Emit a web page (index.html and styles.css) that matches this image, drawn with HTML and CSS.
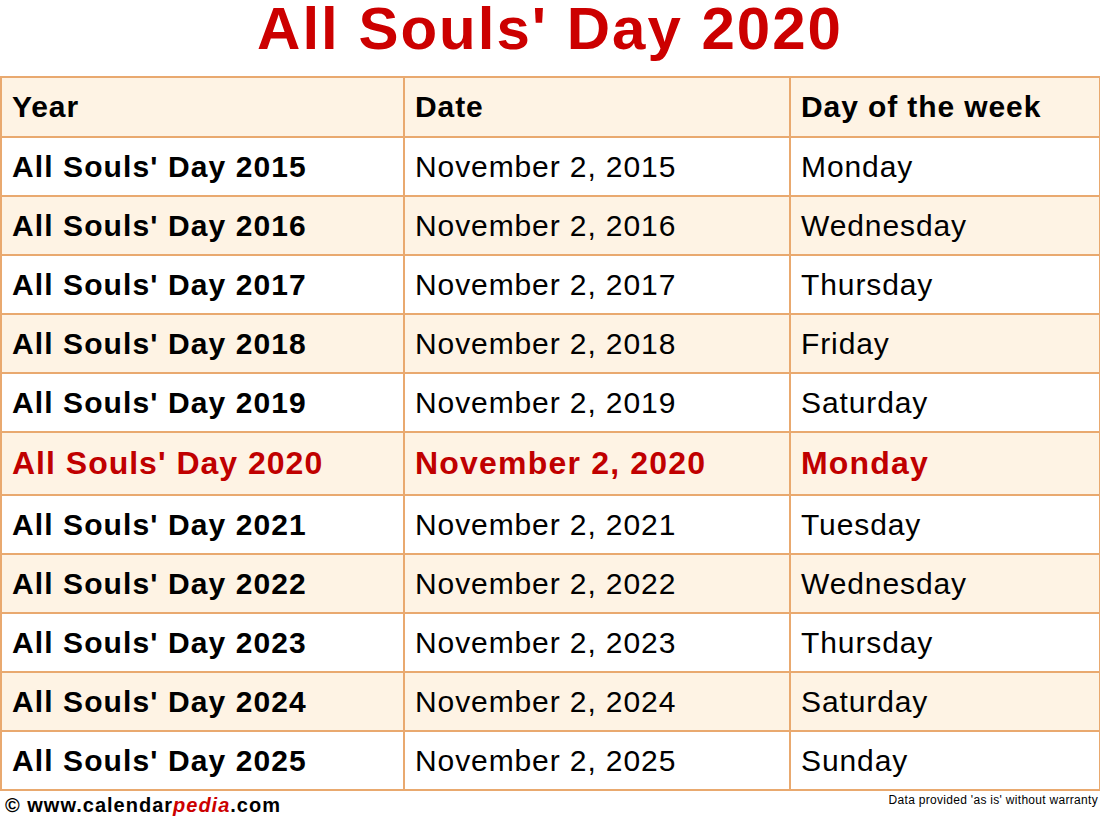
FILE: index.html
```html
<!DOCTYPE html>
<html>
<head>
<meta charset="utf-8">
<link rel="stylesheet" href="styles.css">
</head>
<body>
<h1 class="title">All Souls' Day 2020</h1>
<table class="days">
  <colgroup><col class="c1"><col class="c2"><col class="c3"></colgroup>
  <thead>
    <tr class="alt"><th>Year</th><th>Date</th><th>Day of the week</th></tr>
  </thead>
  <tbody>
    <tr><td>All Souls' Day 2015</td><td>November 2, 2015</td><td>Monday</td></tr>
    <tr class="alt"><td>All Souls' Day 2016</td><td>November 2, 2016</td><td>Wednesday</td></tr>
    <tr><td>All Souls' Day 2017</td><td>November 2, 2017</td><td>Thursday</td></tr>
    <tr class="alt"><td>All Souls' Day 2018</td><td>November 2, 2018</td><td>Friday</td></tr>
    <tr><td>All Souls' Day 2019</td><td>November 2, 2019</td><td>Saturday</td></tr>
    <tr class="alt hl"><td>All Souls' Day 2020</td><td>November 2, 2020</td><td>Monday</td></tr>
    <tr><td>All Souls' Day 2021</td><td>November 2, 2021</td><td>Tuesday</td></tr>
    <tr class="alt"><td>All Souls' Day 2022</td><td>November 2, 2022</td><td>Wednesday</td></tr>
    <tr><td>All Souls' Day 2023</td><td>November 2, 2023</td><td>Thursday</td></tr>
    <tr class="alt"><td>All Souls' Day 2024</td><td>November 2, 2024</td><td>Saturday</td></tr>
    <tr><td>All Souls' Day 2025</td><td>November 2, 2025</td><td>Sunday</td></tr>
  </tbody>
</table>
<div class="footer">
  <div class="brand">© www.calendar<span class="pedia">pedia</span>.com</div>
  <div class="note">Data provided 'as is' without warranty</div>
</div>
</body>
</html>
```

FILE: styles.css
```css
html, body {
  margin: 0;
  padding: 0;
  background: #ffffff;
}
body {
  width: 1100px;
  font-family: "Liberation Sans", Arial, sans-serif;
  color: #000;
}
.title {
  margin: 0 0 18px 0;
  font-size: 60px;
  line-height: 58px;
  font-weight: bold;
  letter-spacing: 2px;
  color: #cc0000;
  text-align: center;
}
.days {
  width: 1099px;
  border-collapse: collapse;
  table-layout: fixed;
  border: 2px solid #e9a96f;
}
.c1 { width: 403px; }
.c2 { width: 386px; }
.c3 { width: 310px; }
.days th, .days td {
  border: 2px solid #e9a96f;
  height: 57px;
  padding: 0 0 0 10px;
  text-align: left;
  vertical-align: middle;
  font-size: 30px;
  letter-spacing: 0.9px;
  white-space: nowrap;
}
.days th {
  height: 58px;
  font-weight: bold;
}
.days td:first-child {
  font-weight: bold;
  letter-spacing: 1.1px;
}
.days tr.alt {
  background: #fef3e4;
}
.days tr.hl td {
  height: 61px;
  color: #c00000;
  font-weight: bold;
  font-size: 32px;
  letter-spacing: 1.2px;
}
.days tr.hl td:first-child {
  letter-spacing: 1px;
}
.footer {
  display: flex;
  justify-content: space-between;
  align-items: flex-start;
  padding: 2px 2px 0 5px;
}
.brand {
  font-size: 20px;
  font-weight: bold;
  line-height: 24px;
  letter-spacing: 1px;
}
.pedia {
  color: #cc0000;
  font-style: italic;
}
.note {
  font-size: 12px;
  line-height: 14px;
  letter-spacing: 0.3px;
}
```
